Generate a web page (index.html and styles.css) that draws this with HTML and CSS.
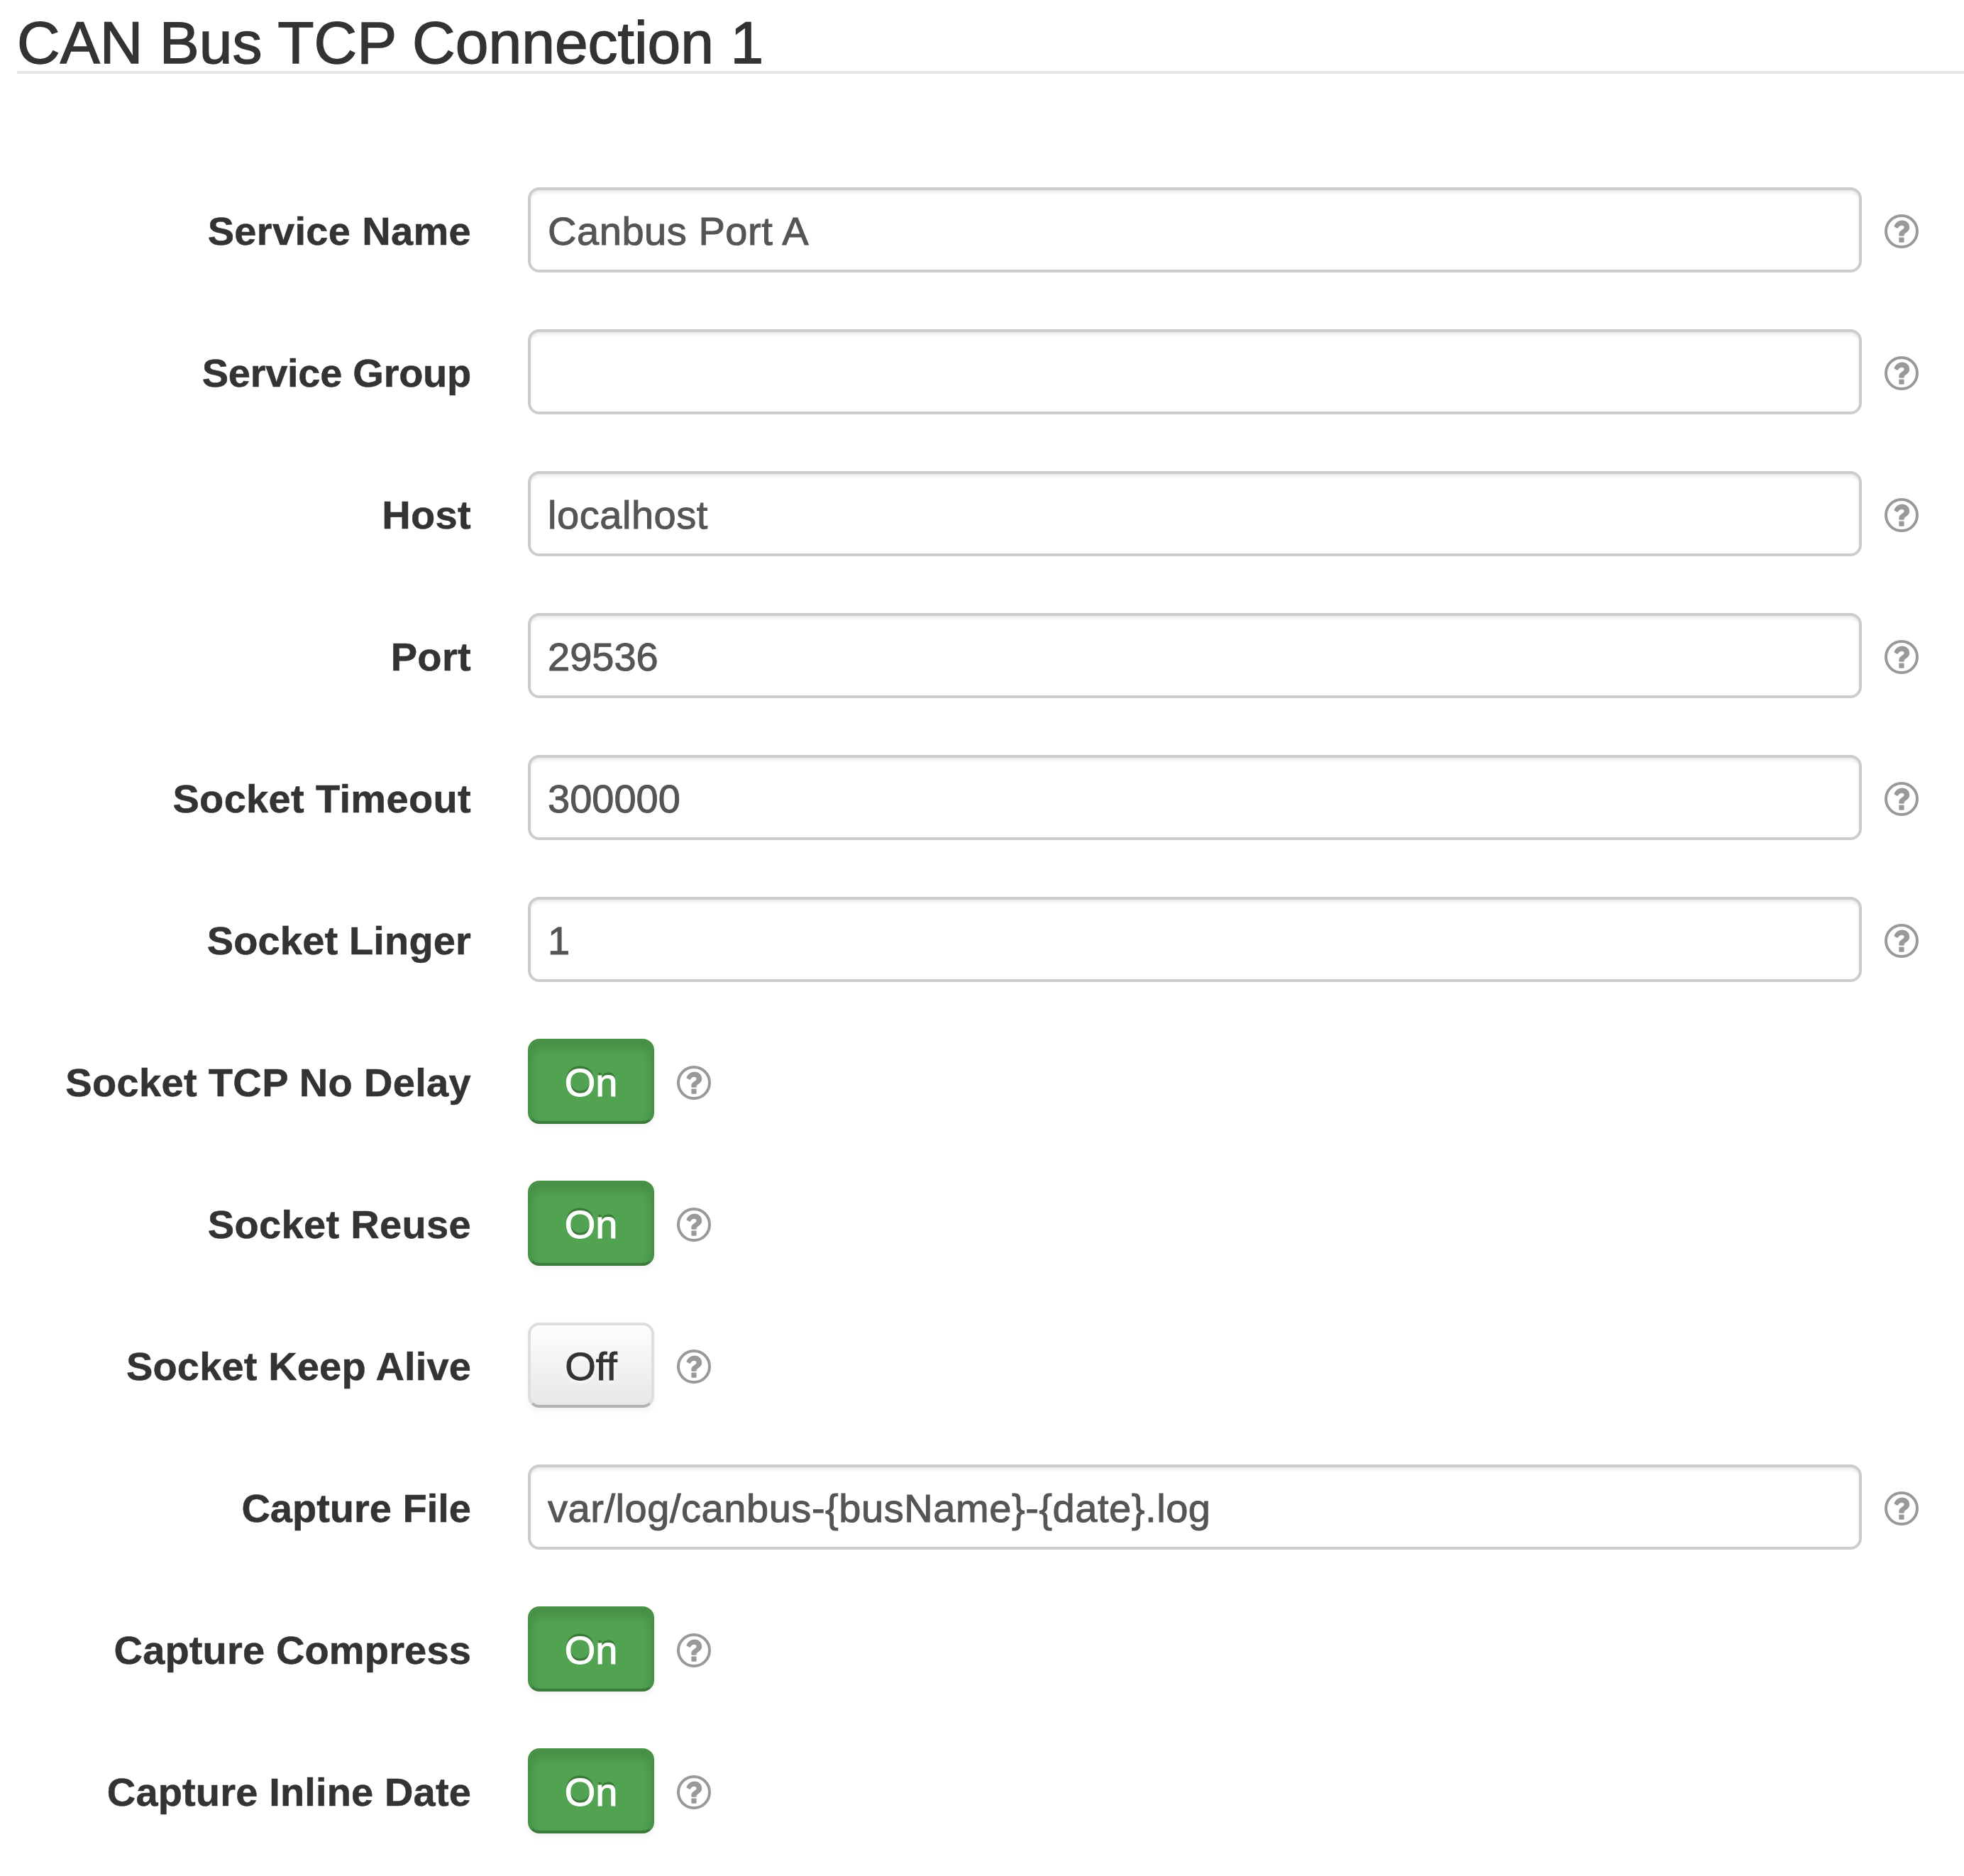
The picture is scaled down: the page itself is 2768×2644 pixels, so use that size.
FILE: index.html
```html
<!DOCTYPE html>
<html lang="en">
<head>
<meta charset="utf-8">
<title>CAN Bus TCP Connection 1</title>
<link rel="stylesheet" href="styles.css">
</head>
<body>
<svg class="defs" width="0" height="0" aria-hidden="true">
  <symbol id="help" viewBox="0 0 48 48">
    <circle cx="24" cy="24" r="22" fill="none" stroke="currentColor" stroke-width="4"/>
    <path d="M13.6 16.2Q17.6 8.6 24.8 8.6C30.2 8.6 35.2 12.6 35.2 18.2C35.2 25.4 27.6 25.8 27.6 29.6Q27.6 30.8 26.6 30.8H21.5Q20.3 30.8 20.3 29.6V28C20.3 22.8 27.6 21.6 27.6 18.4C27.6 16.6 26 15.8 24.2 15.8C21.6 15.8 20.8 17 18.9 19.4Q18.2 20.2 17.4 19.6L13.9 17.4Q13.3 16.8 13.6 16.2Z" fill="currentColor"/>
    <rect x="20.3" y="32.6" width="7.3" height="7.2" rx="1" fill="currentColor"/>
  </symbol>
</svg>
<form class="settings">
  <h2 class="legend"><span>CAN Bus TCP Connection 1</span></h2>
  <div class="row"><label class="label wide"><span>Service Name</span></label><div class="input"><span>Canbus Port A</span></div><svg class="help"><use href="#help"/></svg></div>
  <div class="row"><label class="label tight"><span>Service Group</span></label><div class="input"></div><svg class="help"><use href="#help"/></svg></div>
  <div class="row"><label class="label wide"><span>Host</span></label><div class="input"><span>localhost</span></div><svg class="help"><use href="#help"/></svg></div>
  <div class="row"><label class="label wide"><span>Port</span></label><div class="input number"><span>29536</span></div><svg class="help"><use href="#help"/></svg></div>
  <div class="row"><label class="label wide"><span>Socket Timeout</span></label><div class="input number"><span>300000</span></div><svg class="help"><use href="#help"/></svg></div>
  <div class="row"><label class="label"><span>Socket Linger</span></label><div class="input number"><span>1</span></div><svg class="help"><use href="#help"/></svg></div>
  <div class="row"><label class="label wide"><span>Socket TCP No Delay</span></label><button type="button" class="toggle on">On</button><svg class="help"><use href="#help"/></svg></div>
  <div class="row"><label class="label wide"><span>Socket Reuse</span></label><button type="button" class="toggle on">On</button><svg class="help"><use href="#help"/></svg></div>
  <div class="row"><label class="label"><span>Socket Keep Alive</span></label><button type="button" class="toggle off">Off</button><svg class="help"><use href="#help"/></svg></div>
  <div class="row"><label class="label plain"><span>Capture File</span></label><div class="input"><span>var/log/canbus-{busName}-{date}.log</span></div><svg class="help"><use href="#help"/></svg></div>
  <div class="row"><label class="label"><span>Capture Compress</span></label><button type="button" class="toggle on">On</button><svg class="help"><use href="#help"/></svg></div>
  <div class="row"><label class="label"><span>Capture Inline Date</span></label><button type="button" class="toggle on">On</button><svg class="help"><use href="#help"/></svg></div>
</form>
</body>
</html>
```
FILE: styles.css
```css
* { box-sizing: border-box; }
html, body { margin: 0; background: #fff; }
body {
  font-family: "Liberation Sans", Arial, sans-serif;
  font-size: 56px;
  line-height: 80px;
  color: #333;
  overflow: hidden;
}
.defs { display: block; }
.settings { display: flex; flex-direction: column; }
.legend {
  height: 104px;
  margin: 0 0 160px 24px;
  padding-top: 20px;
  border-bottom: 4px solid #e5e5e5;
  font-size: 84px;
  font-weight: 400;
  line-height: 80px;
  white-space: nowrap;
  -webkit-text-stroke: 1.4px currentColor;
}
.row {
  display: flex;
  align-items: center;
  height: 120px;
  margin-bottom: 80px;
}
.label {
  width: 664px;
  margin-right: 80px;
  padding-top: 4px;
  text-align: right;
  font-weight: 700;
  letter-spacing: .15px;
  white-space: nowrap;
  -webkit-text-stroke: .5px currentColor;
}
.wide { letter-spacing: .33px; }
.tight { letter-spacing: -.27px; }
.plain { letter-spacing: 0; }
.input {
  width: 1880px;
  height: 120px;
  padding: 18px 24px 14px;
  border: 4px solid #ccc;
  border-radius: 16px;
  color: #555;
  letter-spacing: .55px;
  box-shadow: inset 0 4px 4px rgba(0, 0, 0, .075);
  white-space: nowrap;
  -webkit-text-stroke: 1px currentColor;
}
.number { letter-spacing: 0; }
.toggle {
  width: 178px;
  height: 120px;
  padding: 4px 0 0;
  border: 4px solid;
  border-radius: 16px;
  font: inherit;
  -webkit-text-stroke: 1px currentColor;
}
.on {
  color: #fff;
  background: #51a351;
  border-color: rgba(0, 0, 0, .1) rgba(0, 0, 0, .1) rgba(0, 0, 0, .25);
  text-shadow: 0 -4px 0 rgba(0, 0, 0, .25);
  box-shadow: inset 0 8px 16px rgba(0, 0, 0, .15), 0 4px 8px rgba(0, 0, 0, .05);
}
.off {
  color: #333;
  background: linear-gradient(#fff, #e6e6e6) border-box;
  border-color: #dedede #dedede #b3b3b3;
  text-shadow: 0 4px 4px rgba(255, 255, 255, .75);
  box-shadow: inset 0 4px 0 rgba(255, 255, 255, .2), 0 4px 8px rgba(0, 0, 0, .05);
}
.help {
  flex: none;
  width: 48px;
  height: 48px;
  margin: 4px 0 0 32px;
  color: #999;
}
```
